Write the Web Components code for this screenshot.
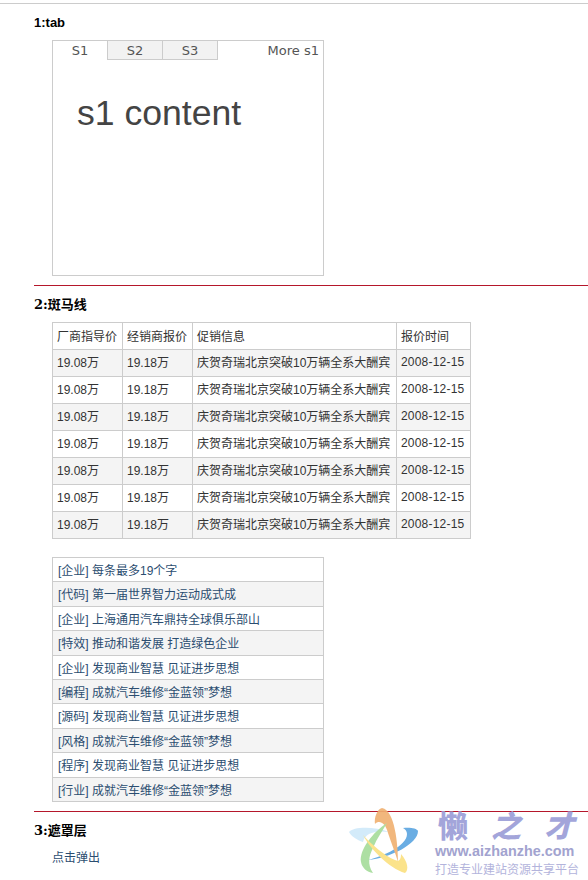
<!DOCTYPE html>
<html>
<head>
<meta charset="utf-8">
<title>demo</title>
<style>
  html, body { margin: 0; padding: 0; background: #fff; }
  body {
    height: 877px;
    overflow: hidden;
    box-sizing: border-box;
    border-top: 1px solid #ccc;
    margin-top: 3px;
    padding-left: 34px;
    position: relative;
    font: 12px "Liberation Sans", "Noto Sans CJK SC", sans-serif;
    color: #333;
  }
</style>
</head>
<body>
<demo-section heading="1:tab" style="height:281px">
  <tab-box></tab-box>
</demo-section>
<demo-section heading="2:斑马线" lined style="height:526px">
  <zebra-table></zebra-table>
  <news-list></news-list>
</demo-section>
<demo-section heading="3:遮罩层" lined>
  <a href="#" class="open" style="color:#2b4d70;text-decoration:none;display:block;margin-left:18px">点击弹出</a>
</demo-section>
<site-mark></site-mark>

<script>
class DemoSection extends HTMLElement {
  constructor() {
    super();
    this.attachShadow({ mode: 'open' });
  }

  connectedCallback() {
    this.shadowRoot.innerHTML = `
      <style>
        :host { display: block; box-sizing: border-box; }
        .rule { display: none; height: 1px; background: #b5172b; }
        :host([lined]) .rule { display: block; }
        h3 {
          margin: 0;
          padding-top: 11px;
          height: 36px;
          box-sizing: border-box;
          font: bold 13px/16px "Liberation Sans", "Noto Sans CJK SC", sans-serif;
          color: #000;
        }
        :host([lined]) h3 {
          font-family: "DejaVu Serif", "Noto Sans CJK SC", serif;
        }
      </style>
      <div class="rule"></div>
      <h3>${this.getAttribute('heading')}</h3>
      <slot></slot>
    `;
  }
}

class TabBox extends HTMLElement {
  constructor() {
    super();
    this.attachShadow({ mode: 'open' });
  }

  connectedCallback() {
    this.shadowRoot.innerHTML = `
      <style>
        :host {
          display: block;
          box-sizing: border-box;
          width: 272px;
          height: 236px;
          margin-left: 18px;
          border: 1px solid #ccc;
          color: #555;
        }
        .bar { display: flex; height: 19px; font: 13px/19px "DejaVu Sans", sans-serif; }
        .tab {
          box-sizing: border-box;
          width: 55px;
          text-align: center;
          background: #f2f2f2;
          border-right: 1px solid #ccc;
          border-bottom: 1px solid #ccc;
        }
        .tab.on { background: #fff; border-bottom: 0; }
        .more { margin-left: auto; padding-right: 4px; }
        .body { padding: 34px 24px 0; font: 35.6px/38px "Liberation Sans", sans-serif; color: #444; }
      </style>
      <div class="bar">
        <div class="tab on">S1</div>
        <div class="tab">S2</div>
        <div class="tab">S3</div>
        <div class="more">More s1</div>
      </div>
      <div class="body">s1 content</div>
    `;
  }
}

class ZebraTable extends HTMLElement {
  constructor() {
    super();
    this.attachShadow({ mode: 'open' });
  }

  connectedCallback() {
    let rows = '';
    for (let i = 0; i < 7; i++) {
      rows += `<tr><td>19.08万</td><td>19.18万</td><td>庆贺奇瑞北京突破10万辆全系大酬宾</td><td>2008-12-15</td></tr>`;
    }
    this.shadowRoot.innerHTML = `
      <style>
        :host { display: block; margin-left: 18px; width: 418px; }
        table { border-collapse: collapse; table-layout: fixed; width: 418px; }
        th, td {
          box-sizing: border-box;
          height: 27px;
          padding: 0 0 1px 4px;
          border: 1px solid #ccc;
          font-weight: normal;
          text-align: left;
          white-space: nowrap;
          overflow: hidden;
          color: #333;
        }
        td { padding-bottom: 3px; }
        td:last-child { letter-spacing: .2px; }
        tbody tr:nth-child(odd) { background: #f4f4f4; }
      </style>
      <table>
        <colgroup><col style="width:70px"><col style="width:70px"><col style="width:204px"><col style="width:74px"></colgroup>
        <thead><tr><th>厂商指导价</th><th>经销商报价</th><th>促销信息</th><th>报价时间</th></tr></thead>
        <tbody>${rows}</tbody>
      </table>
    `;
  }
}

class NewsList extends HTMLElement {
  constructor() {
    super();
    this.attachShadow({ mode: 'open' });
  }

  connectedCallback() {
    const items = [
      ['企业', '每条最多19个字'],
      ['代码', '第一届世界智力运动成式成'],
      ['企业', '上海通用汽车鼎持全球俱乐部山'],
      ['特效', '推动和谐发展 打造绿色企业'],
      ['企业', '发现商业智慧 见证进步思想'],
      ['编程', '成就汽车维修“金蓝领”梦想'],
      ['源码', '发现商业智慧 见证进步思想'],
      ['风格', '成就汽车维修“金蓝领”梦想'],
      ['程序', '发现商业智慧 见证进步思想'],
      ['行业', '成就汽车维修“金蓝领”梦想']
    ];
    this.shadowRoot.innerHTML = `
      <style>
        :host {
          display: block;
          box-sizing: border-box;
          width: 272px;
          margin: 18px 0 0 18px;
          border: 1px solid #ccc;
          border-bottom: 0;
        }
        div {
          box-sizing: border-box;
          height: 24.4px;
          padding: 1px 0 0 5px;
          line-height: 24px;
          border-bottom: 1px solid #ccc;
          color: #2b4d70;
        }
        div:nth-of-type(even) { background: #f4f4f4; }
      </style>
      ${items.map(([tag, text]) => `<div>[${tag}] ${text}</div>`).join('')}
    `;
  }
}

class SiteMark extends HTMLElement {
  constructor() {
    super();
    this.attachShadow({ mode: 'open' });
  }

  connectedCallback() {
    this.shadowRoot.innerHTML = `
      <style>
        :host {
          position: absolute;
          right: 0;
          bottom: 0;
          width: 243px;
          height: 80px;
          font-family: "Liberation Sans", "Noto Sans CJK SC", sans-serif;
        }
        svg { position: absolute; left: 0; top: 0; }
        .txt { position: absolute; left: 90px; top: 6px; width: 143px; }
        .name {
          display: flex;
          justify-content: space-between;
          height: 36px;
          padding: 0 4px 0 3px;
          font: italic 900 30px/36px "Noto Sans CJK SC", sans-serif;
          color: #a3a5da;
        }
        .name span:first-child { font-style: normal; }
        .url { margin-top: 1px; font-weight: bold; font-size: 14.4px; line-height: 16px; color: #a2a3cf; white-space: nowrap; }
        .sub { margin-top: 3px; font-size: 12px; line-height: 16px; color: #b3b4dc; white-space: nowrap; }
      </style>
      <svg width="90" height="80" viewBox="0 0 90 80">
        <g opacity=".9">
          <path d="M4 32C8 27 28 26 44 32C30 30 20 33 18 42C12 40 6 36 4 32Z" fill="#cfe9fa"/>
          <path d="M73 31C73 44 45 58 23 60C38 56 62 46 62 34C62 31 60 29 58 28C64 27 72 28 73 31Z" fill="#5aa5e0"/>
          <path d="M37 8C32 9 29 18 30 24C34 20 40 22 43 33C46 42 50 52 53 62C53 45 50 10 37 8Z" fill="#f0b070"/>
          <path d="M42 23C28 32 14 50 16 62C17 68 22 72 28 73C22 64 24 56 28 48C32 38 38 30 42 23Z" fill="#a5dc9a"/>
          <path d="M18 35C26 50 44 68 60 73C64 70 63 62 56 54C56 60 54 62 50 60C40 56 26 44 18 35Z" fill="#fbe07f"/>
        </g>
      </svg>
      <div class="txt">
        <div class="name"><span>懒</span><span>之</span><span>才</span></div>
        <div class="url">www.aizhanzhe.com</div>
        <div class="sub">打造专业建站资源共享平台</div>
      </div>
    `;
  }
}

customElements.define('demo-section', DemoSection);
customElements.define('tab-box', TabBox);
customElements.define('zebra-table', ZebraTable);
customElements.define('news-list', NewsList);
customElements.define('site-mark', SiteMark);
</script>
</body>
</html>
